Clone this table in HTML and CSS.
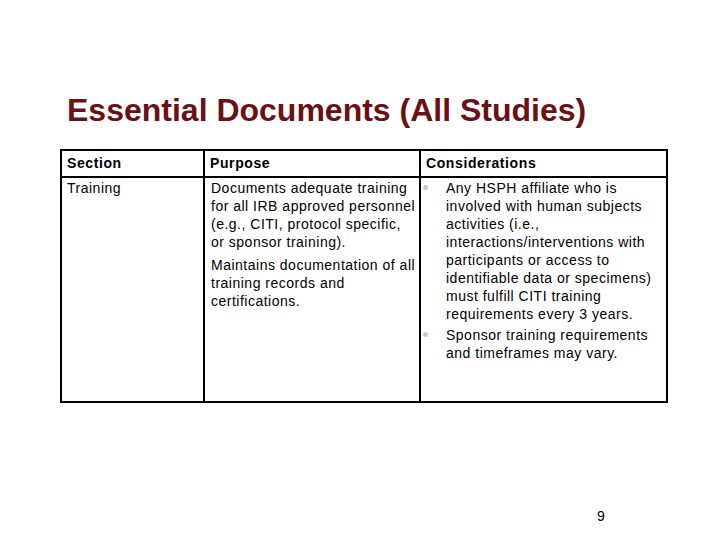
FILE: index.html
```html
<!DOCTYPE html>
<html>
<head>
<meta charset="utf-8">
<link rel="stylesheet" href="styles.css">
</head>
<body>
<div class="slide">
  <h1 class="title">Essential Documents (All Studies)</h1>
  <table class="grid">
    <colgroup>
      <col class="c1"><col class="c2"><col class="c3">
    </colgroup>
    <thead>
      <tr><th>Section</th><th>Purpose</th><th>Considerations</th></tr>
    </thead>
    <tbody>
      <tr>
        <td>Training</td>
        <td>
          <p class="para">Documents adequate training for all IRB approved personnel (e.g., CITI, protocol specific, or sponsor training).</p>
          <p class="para second">Maintains documentation of all training records and certifications.</p>
        </td>
        <td>
          <ul class="bullets">
            <li>Any HSPH affiliate who is involved with human subjects activities (i.e., interactions/interventions with participants or access to identifiable data or specimens) must fulfill CITI training requirements every 3 years.</li>
            <li>Sponsor training requirements and timeframes may vary.</li>
          </ul>
        </td>
      </tr>
    </tbody>
  </table>
  <div class="pagenum">9</div>
</div>
</body>
</html>
```

FILE: styles.css
```css
html, body {
  margin: 0;
  padding: 0;
  background: #ffffff;
}
.slide {
  width: 720px;
  height: 540px;
  position: relative;
  font-family: "Liberation Sans", Arial, sans-serif;
  color: #000;
}
.title {
  margin: 0;
  padding: 89px 0 0 67px;
  font-size: 32px;
  line-height: 42px;
  font-weight: bold;
  color: #6b1014;
}
.grid {
  margin: 18px 0 0 60px;
  border-collapse: collapse;
  width: 606px;
  table-layout: fixed;
  font-size: 14px;
}
.c1 { width: 143px; }
.c2 { width: 216px; }
.c3 { width: 247px; }
.grid th, .grid td {
  border: 2px solid #000;
  text-align: left;
  vertical-align: top;
}
.grid th {
  height: 22px;
  padding: 3px 6px 0 5px;
  font-weight: bold;
  line-height: 18px;
  letter-spacing: 0.6px;
}
.grid td {
  height: 222px;
  padding: 1px 2px 0 5px;
  line-height: 18px;
  letter-spacing: 0.5px;
}
.grid td + td { padding-left: 6px; }
.para { margin: 0; }
.para.second { margin-top: 5px; }
.bullets {
  list-style: none;
  margin: 0;
  padding: 0 0 0 19px;
}
.bullets li {
  position: relative;
}
.bullets li + li { margin-top: 3px; }
.bullets li::before {
  content: "";
  position: absolute;
  left: -23px;
  top: 6px;
  width: 5px;
  height: 5px;
  border-radius: 50%;
  background: #c8c8c8;
}
.pagenum {
  position: absolute;
  left: 597px;
  top: 508px;
  font-size: 14px;
}
```
